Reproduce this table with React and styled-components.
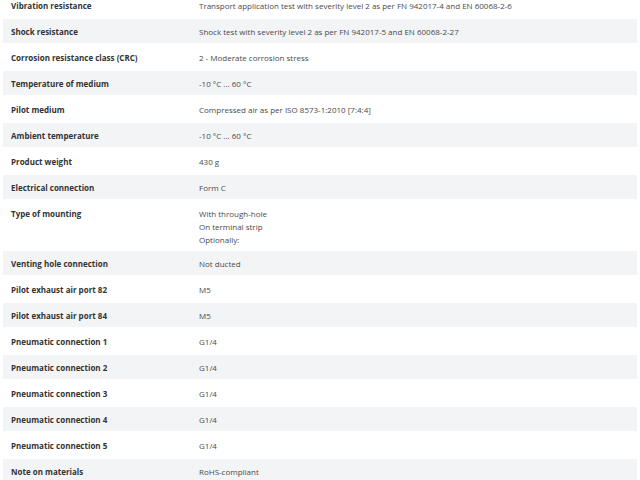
import React from 'react';
import styled, { createGlobalStyle } from 'styled-components';

const GlobalStyle = createGlobalStyle`
    body {
        margin: 0;
        background: #ffffff;
        font-family: "Open Sans", "Liberation Sans", sans-serif;
    }
`

const SpecTable = styled.div`
    display: flex;
    flex-direction: column;
    gap: 2px;
    margin: -7px 3px 0 3px;
`

const Row = styled.div`
    display: grid;
    grid-template-columns: 196px 1fr;
    align-items: start;
    min-height: 24px;
    padding: 6px 0 3px;
    box-sizing: border-box;
    background: ${props => props.shaded ? '#f3f4f5' : '#ffffff'};
`

const Label = styled.div`
    padding-left: 8px;
    font-size: 8px;
    font-weight: 700;
    line-height: 13px;
    color: #333333;
`

const Value = styled.div`
    font-size: 8px;
    line-height: 13px;
    color: #4a4a4a;
`

const specs = [
    ['Vibration resistance', ['Transport application test with severity level 2 as per FN 942017-4 and EN 60068-2-6']],
    ['Shock resistance', ['Shock test with severity level 2 as per FN 942017-5 and EN 60068-2-27']],
    ['Corrosion resistance class (CRC)', ['2 - Moderate corrosion stress']],
    ['Temperature of medium', ['-10 °C ... 60 °C']],
    ['Pilot medium', ['Compressed air as per ISO 8573-1:2010 [7:4:4]']],
    ['Ambient temperature', ['-10 °C ... 60 °C']],
    ['Product weight', ['430 g']],
    ['Electrical connection', ['Form C']],
    ['Type of mounting', ['With through-hole', 'On terminal strip', 'Optionally:']],
    ['Venting hole connection', ['Not ducted']],
    ['Pilot exhaust air port 82', ['M5']],
    ['Pilot exhaust air port 84', ['M5']],
    ['Pneumatic connection 1', ['G1/4']],
    ['Pneumatic connection 2', ['G1/4']],
    ['Pneumatic connection 3', ['G1/4']],
    ['Pneumatic connection 4', ['G1/4']],
    ['Pneumatic connection 5', ['G1/4']],
    ['Note on materials', ['RoHS-compliant']],
];

const App = () => {
    return (
        <>
            <GlobalStyle />
            <SpecTable>
                {specs.map(([label, lines], i) => (
                    <Row key={label} shaded={i % 2 === 1}>
                        <Label>{label}</Label>
                        <Value>
                            {lines.map(line => <div key={line}>{line}</div>)}
                        </Value>
                    </Row>
                ))}
            </SpecTable>
        </>
    );
}

export default App;
